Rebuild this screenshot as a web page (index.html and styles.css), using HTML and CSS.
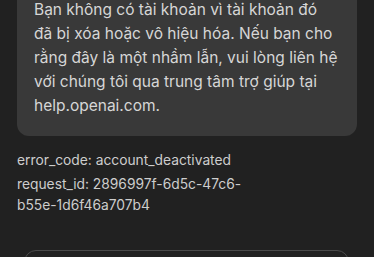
FILE: index.html
```html
<!DOCTYPE html>
<html lang="vi">
<head>
<meta charset="utf-8">
<link rel="stylesheet" href="styles.css">
</head>
<body>
<main class="page">
  <div class="message">Bạn không có tài khoản vì tài khoản đó đã bị xóa hoặc vô hiệu hóa. Nếu bạn cho rằng đây là một nhầm lẫn, vui lòng liên hệ với chúng tôi qua trung tâm trợ giúp tại help.openai.com.</div>
  <p class="meta">error_code: account_deactivated</p>
  <p class="meta">request_id: 2896997f-6d5c-47c6-b55e-1d6f46a707b4</p>
  <div class="action"></div>
</main>
</body>
</html>
```
FILE: styles.css
```css
html, body {
  margin: 0;
  padding: 0;
  background: #212121;
  overflow: hidden;
}
.page {
  width: 340px;
  padding: 0 17px;
  font-family: Inter, "Noto Sans", sans-serif;
}
.message {
  margin-top: -20px;
  padding: 18px 18px 18px 17px;
  background: #393939;
  border-radius: 12px;
  color: #d6d6d6;
  font-size: 15.5px;
  line-height: 24px;
}
.meta {
  margin: 14px 0 0;
  color: #cdcdcd;
  font-size: 13.8px;
  line-height: 21px;
  width: 240px;
}
.meta + .meta {
  margin-top: 3px;
}
.action {
  margin: 34px 8px 0 7px;
  height: 60px;
  border: 1px solid #4a4a4a;
  border-radius: 12px;
}
```
